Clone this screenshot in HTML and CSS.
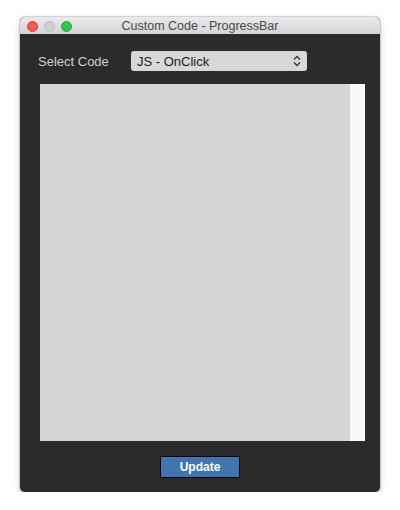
FILE: index.html
```html
<!DOCTYPE html>
<html>
<head>
<meta charset="utf-8">
<link rel="stylesheet" href="styles.css">
</head>
<body>
<div class="window">
  <div class="titlebar">
    <div class="lights">
      <span class="light red"></span>
      <span class="light gray"></span>
      <span class="light green"></span>
    </div>
    <div class="title">Custom Code - ProgressBar</div>
    <div></div>
  </div>
  <div class="content">
    <div class="row">
      <span class="label">Select Code</span>
      <div class="select">
        <span>JS - OnClick</span>
        <svg class="chev" width="8" height="12" viewBox="0 0 8 12">
          <path d="M1 4.5 L4 1.5 L7 4.5 M1 7.5 L4 10.5 L7 7.5" fill="none" stroke="#333" stroke-width="1.3"/>
        </svg>
      </div>
    </div>
    <div class="editor">
      <div class="code"></div>
      <div class="scroll"></div>
    </div>
    <div class="actions">
      <button class="btn">Update</button>
    </div>
  </div>
</div>
</body>
</html>
```
FILE: styles.css
```css
html, body {
  margin: 0;
  padding: 0;
  background: #ffffff;
}
body {
  font-family: "Liberation Sans", Arial, sans-serif;
  padding: 17px 0 0 20px;
}
.window {
  width: 360px;
  background: #2b2b2b;
  border-radius: 5px;
  overflow: hidden;
  box-shadow: 0 0 0 1px rgba(0,0,0,0.12), 0 2px 6px rgba(0,0,0,0.25);
}
.titlebar {
  height: 17px;
  display: grid;
  grid-template-columns: 1fr auto 1fr;
  align-items: center;
  background: linear-gradient(#ebe9eb, #d5d3d5);
}
.lights {
  display: flex;
  gap: 6px;
  padding-left: 7px;
  align-items: center;
}
.light {
  width: 11px;
  height: 11px;
  border-radius: 50%;
  box-sizing: border-box;
}
.red { background: #fc5753; border: 0.5px solid #df3d39; }
.gray { background: #d0d0d0; border: 0.5px solid #bcbcbc; }
.green { background: #33c748; border: 0.5px solid #1ea930; }
.title {
  font-size: 12.5px;
  color: #4a4a4a;
  line-height: 17px;
  padding-top: 1px;
}
.content {
  display: flex;
  flex-direction: column;
  padding: 17px 0 14px 0;
}
.row {
  display: flex;
  align-items: center;
  height: 20px;
}
.label {
  flex: 0 0 111px;
  padding-left: 18px;
  box-sizing: border-box;
  font-size: 13px;
  color: #d0d0d0;
}
.select {
  flex: 0 0 176px;
  height: 20px;
  box-sizing: border-box;
  background: #d8d8d8;
  border-radius: 3px;
  display: flex;
  align-items: center;
  justify-content: space-between;
  padding: 0 6px 0 6px;
  font-size: 13px;
  color: #1a1a1a;
}
.chev { display: block; }
.editor {
  margin: 13px 0 0 20px;
  width: 325px;
  height: 357px;
  display: flex;
}
.code {
  flex: 1;
  background: #d6d6d6;
}
.scroll {
  width: 15px;
  background: #f9f9f9;
}
.actions {
  display: flex;
  justify-content: center;
  margin-top: 15px;
}
.btn {
  width: 80px;
  height: 22px;
  background: #3e76b0;
  border: 1px solid #000;
  color: #ffffff;
  font-family: "Liberation Sans", Arial, sans-serif;
  font-weight: bold;
  font-size: 12px;
  padding: 0;
  margin: 0;
}
```
